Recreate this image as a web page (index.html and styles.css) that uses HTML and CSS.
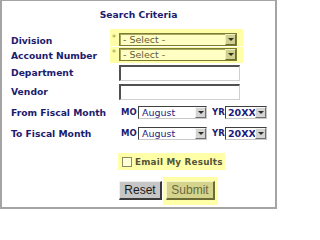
FILE: index.html
```html
<!DOCTYPE html>
<html>
<head>
<meta charset="utf-8">
<link rel="stylesheet" href="styles.css">
</head>
<body>
<div class="frame">
  <div class="title">Search Criteria</div>

  <div class="row r1">
    <div class="lbl l1">Division</div>
    <div class="hl hl1">
      <span class="req">*</span>
      <div class="sel ysel"><span class="val">- Select -</span><span class="btn ybtn"><i class="tri"></i></span></div>
    </div>
  </div>
  <div class="row r2">
    <div class="lbl l2">Account Number</div>
    <div class="hl hl2">
      <span class="req">*</span>
      <div class="sel ysel"><span class="val">- Select -</span><span class="btn ybtn"><i class="tri"></i></span></div>
    </div>
  </div>
  <div class="row r3">
    <div class="lbl">Department</div>
    <div class="ctl"><div class="inp"></div></div>
  </div>
  <div class="row r4">
    <div class="lbl">Vendor</div>
    <div class="ctl"><div class="inp"></div></div>
  </div>
  <div class="row r5">
    <div class="lbl">From Fiscal Month</div>
    <div class="ctl date">
      <span class="tag mo">MO</span>
      <div class="sel wsel month"><span class="val">August</span><span class="btn gbtn"><i class="tri"></i></span></div>
      <span class="tag yr">YR</span>
      <div class="sel wsel year"><span class="val yv">20XX</span><span class="btn gbtn"><i class="tri"></i></span></div>
    </div>
  </div>
  <div class="row r6">
    <div class="lbl">To Fiscal Month</div>
    <div class="ctl date">
      <span class="tag mo">MO</span>
      <div class="sel wsel month"><span class="val">August</span><span class="btn gbtn"><i class="tri"></i></span></div>
      <span class="tag yr">YR</span>
      <div class="sel wsel year"><span class="val yv">20XX</span><span class="btn gbtn"><i class="tri"></i></span></div>
    </div>
  </div>

  <div class="row r7">
    <div class="lbl"></div>
    <div class="ctl">
      <label class="email"><span class="cb"></span><span class="etext">Email My Results</span></label>
    </div>
  </div>

  <div class="row r8">
    <div class="lbl"></div>
    <div class="ctl buttons">
      <span class="button reset">Reset</span>
      <span class="subwrap"><span class="button submit">Submit</span></span>
    </div>
  </div>
</div>
</body>
</html>
```
FILE: styles.css
```css
html, body {
  margin: 0;
  padding: 0;
  background: #ffffff;
}
.frame {
  width: 277px;
  height: 209px;
  box-sizing: border-box;
  border: 2px solid #a4a4a4;
  border-top-width: 1px;
  font-family: "DejaVu Sans", Verdana, sans-serif;
  color: #1c1c6e;
}
.title {
  margin-top: 7px;
  height: 14px;
  line-height: 14px;
  text-align: center;
  font-weight: bold;
  font-size: 9.2px;
  color: #1c1c6e;
}
.row {
  display: flex;
  align-items: center;
}
.lbl {
  width: 108px;
  box-sizing: border-box;
  padding-left: 9px;
  font-weight: bold;
  font-size: 9.2px;
  line-height: 12px;
  color: #1c1c6e;
  white-space: nowrap;
  flex: none;
}
.l1 { padding-top: 7px; }
.l2 { padding-top: 2px; }
.r1 { margin-top: 6px; }
.hl {
  width: 133px;
  background: #ffffa8;
  display: flex;
  align-items: flex-start;
  box-sizing: border-box;
}
.hl1 { height: 17px; padding-top: 4px; }
.hl2 { height: 16px; padding-top: 1px; }
.req {
  width: 9px;
  flex: none;
  font-size: 8px;
  line-height: 8px;
  color: #a0a040;
  padding-left: 2px;
  padding-top: 2px;
  box-sizing: border-box;
}
.sel {
  display: flex;
  align-items: stretch;
  box-sizing: border-box;
  height: 13px;
}
.val {
  flex: 1;
  font-size: 9.5px;
  line-height: 11px;
  padding-left: 3px;
  white-space: nowrap;
  overflow: hidden;
}
.ysel {
  width: 118px;
  background: #ffffc4;
  border: 1px solid #7c7c34;
  box-shadow: inset 1px 1px 0 #a8a860;
}
.ysel .val { color: #5e5e3c; }
.btn {
  width: 11px;
  flex: none;
  display: flex;
  align-items: center;
  justify-content: center;
  box-sizing: border-box;
}
.ybtn {
  background: #cfcf90;
  border-left: 1px solid #eeeec0;
  border-top: 1px solid #eeeec0;
  border-right: 1px solid #6a6a2a;
  border-bottom: 1px solid #6a6a2a;
}
.gbtn {
  background: #d4d4d4;
  border-left: 1px solid #f4f4f4;
  border-top: 1px solid #f4f4f4;
  border-right: 1px solid #707070;
  border-bottom: 1px solid #707070;
}
.tri {
  display: block;
  width: 0;
  height: 0;
  border-left: 3px solid transparent;
  border-right: 3px solid transparent;
  border-top: 3px solid #303020;
}
.ctl {
  display: flex;
  align-items: center;
}
.inp {
  width: 121px;
  height: 16px;
  box-sizing: border-box;
  background: #ffffff;
  border-top: 2px solid #505050;
  border-left: 2px solid #505050;
  border-right: 1px solid #d0d0d0;
  border-bottom: 1px solid #d0d0d0;
  margin-left: 9px;
}
.r3 { margin-top: 2px; }
.r4 { margin-top: 3px; }
.r5 { margin-top: 6px; height: 13px; }
.r6 { margin-top: 8px; height: 13px; }
.tag {
  font-weight: bold;
  font-size: 8.5px;
  line-height: 11px;
  color: #1c1c6e;
  flex: none;
}
.mo { margin-left: 11px; width: 17px; }
.yr { margin-left: 5px; width: 13px; }
.wsel {
  background: #ffffff;
  border-top: 1px solid #404040;
  border-left: 1px solid #404040;
  border-right: 1px solid #c8c8c8;
  border-bottom: 1px solid #c8c8c8;
}
.wsel .val { color: #1c1c7e; font-size: 9.5px; }
.month { width: 69px; }
.year { width: 42px; }
.yv { font-weight: bold; font-size: 8.5px; padding-left: 2px; }
.r7 { margin-top: 13px; }
.email {
  margin-left: 8px;
  width: 107px;
  height: 17px;
  background: #ffffa8;
  display: flex;
  align-items: center;
  box-sizing: border-box;
  padding-left: 4px;
}
.cb {
  width: 10px;
  height: 10px;
  box-sizing: border-box;
  background: #ffffd8;
  border: 1px solid #8a8a60;
  flex: none;
}
.etext {
  margin-left: 3px;
  font-weight: bold;
  font-size: 8.8px;
  letter-spacing: 0.2px;
  color: #55553c;
  white-space: nowrap;
}
.r8 { margin-top: 7px; align-items: flex-start; }
.buttons { align-items: flex-start; }
.button {
  display: flex;
  align-items: center;
  justify-content: center;
  box-sizing: border-box;
  height: 19px;
  font-family: "Liberation Sans", Arial, sans-serif;
  font-size: 12px;
}
.reset {
  margin-left: 9px;
  margin-top: 4px;
  width: 43px;
  background: #c6c6c6;
  color: #1a1a1a;
  border-top: 1px solid #f0f0f0;
  border-left: 1px solid #f0f0f0;
  border-right: 2px solid #3a3a3a;
  border-bottom: 2px solid #3a3a3a;
}
.subwrap {
  margin-left: 1px;
  width: 55px;
  height: 28px;
  background: #ffffa8;
  box-sizing: border-box;
  padding: 4px 0 0 3px;
  display: flex;
  align-items: flex-start;
}
.submit {
  width: 49px;
  background: #d4d48c;
  color: #6a6a40;
  border-top: 1px solid #f4f4c8;
  border-left: 1px solid #f4f4c8;
  border-right: 2px solid #6c6c34;
  border-bottom: 2px solid #6c6c34;
}
```
